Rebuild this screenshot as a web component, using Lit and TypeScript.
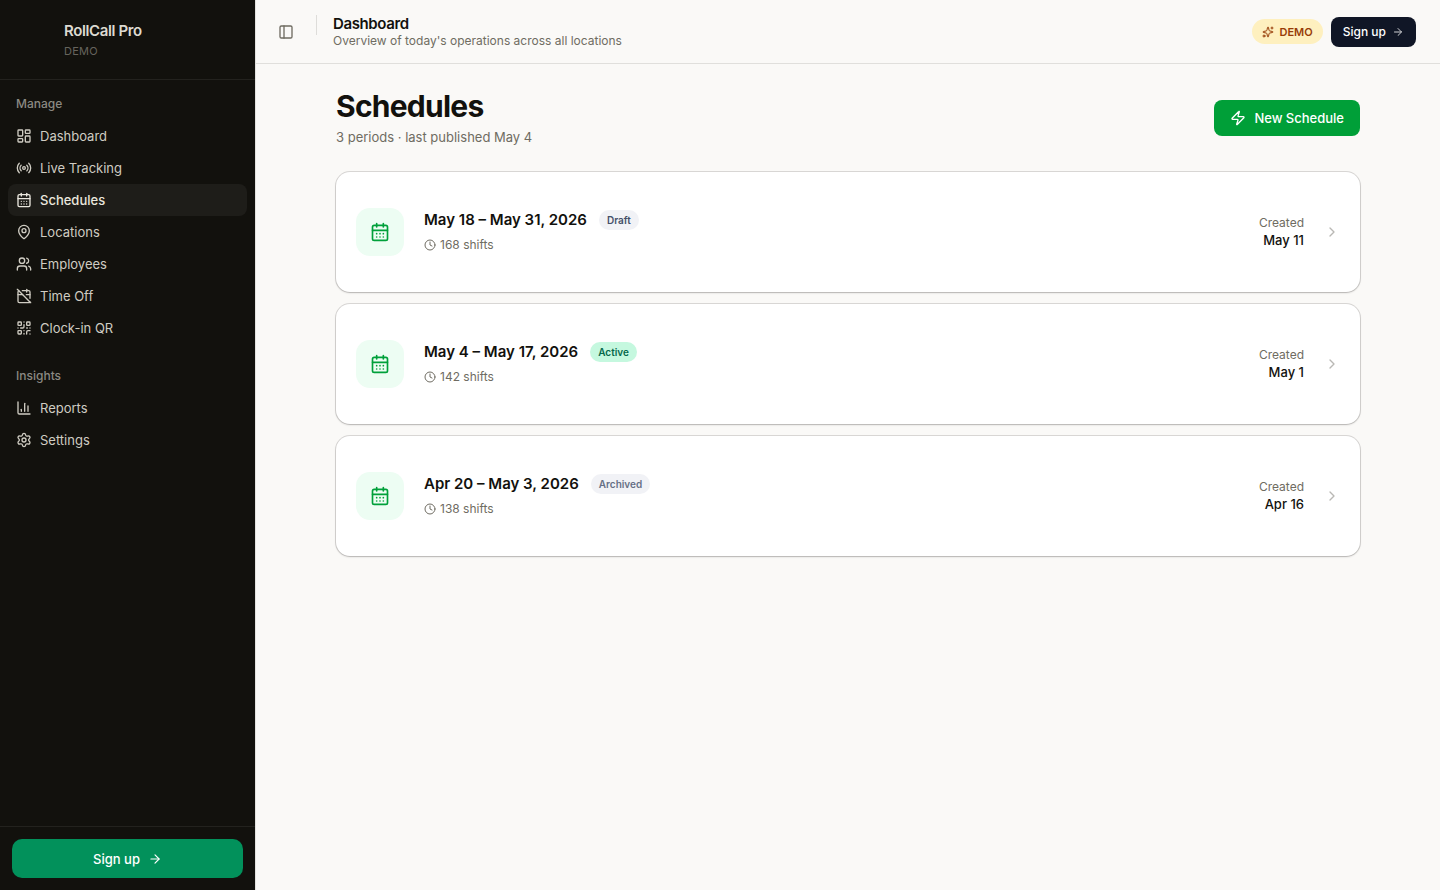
import { LitElement, html, css, svg, nothing } from "lit";
import { customElement, property } from "lit/decorators.js";
import { classMap } from "lit/directives/class-map.js";

const icons = {
  dashboard: svg`<rect width="7" height="9" x="3" y="3" rx="1"/><rect width="7" height="5" x="14" y="3" rx="1"/><rect width="7" height="9" x="14" y="12" rx="1"/><rect width="7" height="5" x="3" y="16" rx="1"/>`,
  radio: svg`<path d="M4.9 19.1C1 15.2 1 8.8 4.9 4.9"/><path d="M7.8 16.2c-2.3-2.3-2.3-6.1 0-8.5"/><circle cx="12" cy="12" r="2"/><path d="M16.2 7.8c2.3 2.3 2.3 6.1 0 8.5"/><path d="M19.1 4.9C23 8.8 23 15.1 19.1 19"/>`,
  calendar: svg`<path d="M8 2v4"/><path d="M16 2v4"/><rect width="18" height="18" x="3" y="4" rx="2"/><path d="M3 10h18"/><path d="M8 14h.01"/><path d="M12 14h.01"/><path d="M16 14h.01"/><path d="M8 18h.01"/><path d="M12 18h.01"/><path d="M16 18h.01"/>`,
  pin: svg`<path d="M20 10c0 4.993-5.539 10.193-7.399 11.799a1 1 0 0 1-1.202 0C9.539 20.193 4 14.993 4 10a8 8 0 0 1 16 0"/><circle cx="12" cy="10" r="3"/>`,
  users: svg`<path d="M16 21v-2a4 4 0 0 0-4-4H6a4 4 0 0 0-4 4v2"/><path d="M16 3.128a4 4 0 0 1 0 7.744"/><path d="M22 21v-2a4 4 0 0 0-3-3.87"/><circle cx="9" cy="7" r="4"/>`,
  calendarOff: svg`<path d="M4.2 4.2A2 2 0 0 0 3 6v14a2 2 0 0 0 2 2h14a2 2 0 0 0 1.82-1.18"/><path d="M21 15.5V6a2 2 0 0 0-2-2H9.5"/><path d="M16 2v4"/><path d="M3 10h7"/><path d="M21 10h-5.5"/><path d="m2 2 20 20"/>`,
  qr: svg`<rect width="5" height="5" x="3" y="3" rx="1"/><rect width="5" height="5" x="16" y="3" rx="1"/><rect width="5" height="5" x="3" y="16" rx="1"/><path d="M21 16h-3a2 2 0 0 0-2 2v3"/><path d="M21 21v.01"/><path d="M12 7v3a2 2 0 0 1-2 2H7"/><path d="M3 12h.01"/><path d="M12 3h.01"/><path d="M12 16v.01"/><path d="M16 12h1"/><path d="M21 12v.01"/><path d="M12 21v-1"/>`,
  chart: svg`<path d="M3 3v16a2 2 0 0 0 2 2h16"/><path d="M18 17V9"/><path d="M13 17V5"/><path d="M8 17v-3"/>`,
  settings: svg`<path d="M9.671 4.136a2.34 2.34 0 0 1 4.659 0 2.34 2.34 0 0 0 3.319 1.915 2.34 2.34 0 0 1 2.33 4.033 2.34 2.34 0 0 0 0 3.831 2.34 2.34 0 0 1-2.33 4.033 2.34 2.34 0 0 0-3.319 1.915 2.34 2.34 0 0 1-4.659 0 2.34 2.34 0 0 0-3.32-1.915 2.34 2.34 0 0 1-2.33-4.033 2.34 2.34 0 0 0 0-3.831A2.34 2.34 0 0 1 6.35 6.051a2.34 2.34 0 0 0 3.319-1.915"/><circle cx="12" cy="12" r="3"/>`,
  panel: svg`<rect width="18" height="18" x="3" y="3" rx="2"/><path d="M9 3v18"/>`,
  arrow: svg`<path d="M5 12h14"/><path d="m12 5 7 7-7 7"/>`,
  chevron: svg`<path d="m9 18 6-6-6-6"/>`,
  clock: svg`<circle cx="12" cy="12" r="10"/><path d="M12 6v6l4 2"/>`,
  zap: svg`<path d="M4 14a1 1 0 0 1-.78-1.63l9.9-10.2a.5.5 0 0 1 .86.46l-1.92 6.02A1 1 0 0 0 13 10h7a1 1 0 0 1 .78 1.63l-9.9 10.2a.5.5 0 0 1-.86-.46l1.92-6.02A1 1 0 0 0 11 14z"/>`,
  sparkles: svg`<path d="M11.017 2.814a1 1 0 0 1 1.966 0l1.051 5.558a2 2 0 0 0 1.594 1.594l5.558 1.051a1 1 0 0 1 0 1.966l-5.558 1.051a2 2 0 0 0-1.594 1.594l-1.051 5.558a1 1 0 0 1-1.966 0l-1.051-5.558a2 2 0 0 0-1.594-1.594l-5.558-1.051a1 1 0 0 1 0-1.966l5.558-1.051a2 2 0 0 0 1.594-1.594z"/><path d="M20 2v4"/><path d="M22 4h-4"/><circle cx="4" cy="20" r="2"/>`,
};

type IconName = keyof typeof icons;

const icon = (name: IconName, size = 16) => html`
  <svg
    width=${size}
    height=${size}
    viewBox="0 0 24 24"
    fill="none"
    stroke="currentColor"
    stroke-width="2"
    stroke-linecap="round"
    stroke-linejoin="round"
    aria-hidden="true"
  >${icons[name]}</svg>
`;

const base = css`
  * {
    box-sizing: border-box;
    margin: 0;
    padding: 0;
  }
  svg {
    display: block;
    flex: none;
  }
  a {
    color: inherit;
    text-decoration: none;
  }
  button {
    font: inherit;
    border: 0;
    cursor: pointer;
  }
  ul {
    list-style: none;
  }
`;

const navigation: { label: string; items: { text: string; icon: IconName }[] }[] = [
  {
    label: "Manage",
    items: [
      { text: "Dashboard", icon: "dashboard" },
      { text: "Live Tracking", icon: "radio" },
      { text: "Schedules", icon: "calendar" },
      { text: "Locations", icon: "pin" },
      { text: "Employees", icon: "users" },
      { text: "Time Off", icon: "calendarOff" },
      { text: "Clock-in QR", icon: "qr" },
    ],
  },
  {
    label: "Insights",
    items: [
      { text: "Reports", icon: "chart" },
      { text: "Settings", icon: "settings" },
    ],
  },
];

@customElement("app-sidebar")
export class AppSidebar extends LitElement {
  @property() current = "";

  static styles = [
    base,
    css`
      :host {
        display: flex;
        flex-direction: column;
        background: #12110d;
        color: #cfccc2;
        border-right: 1px solid #e3e2df;
      }
      .brand {
        height: 80px;
        padding: 20px 16px 0 64px;
        border-bottom: 1px solid #23221e;
      }
      .name {
        font-size: 15px;
        font-weight: 600;
        line-height: 22px;
        letter-spacing: -0.025em;
        color: #dddad1;
      }
      .plan {
        font-size: 11px;
        line-height: 18px;
        letter-spacing: 0.02em;
        color: #66645d;
      }
      nav {
        flex: 1;
      }
      .group {
        padding: 8px;
      }
      .label {
        font-size: 12px;
        font-weight: 500;
        line-height: 32px;
        padding: 0 8px;
        color: #8b8982;
      }
      .link {
        display: flex;
        align-items: center;
        gap: 8px;
        height: 32px;
        padding: 0 8px;
        border-radius: 8px;
        font-size: 13px;
      }
      .link.active {
        background: #1e1d19;
        color: #eae7de;
        font-weight: 500;
      }
      .foot {
        padding: 12px;
        border-top: 1px solid #23221e;
      }
      .signup {
        display: flex;
        align-items: center;
        justify-content: center;
        gap: 8px;
        width: 100%;
        height: 39px;
        border-radius: 10px;
        background: #02915b;
        color: #fff;
        font-size: 13px;
        font-weight: 500;
      }
    `,
  ];

  render() {
    return html`
      <div class="brand">
        <p class="name">RollCall Pro</p>
        <p class="plan">DEMO</p>
      </div>
      <nav aria-label="Main">
        ${navigation.map(
          (group) => html`
            <div class="group">
              <p class="label">${group.label}</p>
              <ul>
                ${group.items.map((item) => {
                  const active = item.text === this.current;
                  return html`<li>
                    <a
                      href="#"
                      class=${classMap({ link: true, active })}
                      aria-current=${active ? "page" : nothing}
                    >${icon(item.icon)}<span>${item.text}</span></a>
                  </li>`;
                })}
              </ul>
            </div>
          `,
        )}
      </nav>
      <div class="foot">
        <button class="signup" type="button">Sign up ${icon("arrow", 14)}</button>
      </div>
    `;
  }
}

@customElement("app-header")
export class AppHeader extends LitElement {
  static styles = [
    base,
    css`
      :host {
        display: block;
      }
      .bar {
        display: flex;
        align-items: center;
        height: 64px;
        padding: 0 24px 0 16px;
        border-bottom: 1px solid #e0dfdc;
      }
      .toggle {
        display: grid;
        place-items: center;
        width: 28px;
        height: 28px;
        background: none;
        color: #6f6c62;
      }
      .rule {
        align-self: flex-start;
        width: 1px;
        height: 20px;
        margin: 15px 16px 0;
        background: #dedddA;
      }
      .titles {
        flex: 1;
      }
      .title {
        font-size: 15px;
        font-weight: 600;
        line-height: 18px;
        letter-spacing: -0.025em;
        color: #12110d;
      }
      .sub {
        font-size: 12px;
        line-height: 16px;
        color: #6f6c62;
      }
      .actions {
        display: flex;
        align-items: center;
        gap: 8px;
      }
      .demo {
        display: flex;
        align-items: center;
        gap: 6px;
        height: 25px;
        padding: 0 10px;
        border-radius: 13px;
        background: #fef0bf;
        color: #973c08;
        font-size: 11px;
        font-weight: 600;
      }
      .signup {
        display: flex;
        align-items: center;
        gap: 6px;
        height: 30px;
        padding: 0 12px;
        border-radius: 8px;
        background: #101626;
        color: #fff;
        font-size: 12px;
        font-weight: 500;
      }
      .signup svg {
        opacity: 0.8;
      }
    `,
  ];

  render() {
    return html`
      <header class="bar">
        <button class="toggle" type="button" aria-label="Toggle sidebar">${icon("panel")}</button>
        <div class="rule"></div>
        <div class="titles">
          <p class="title">Dashboard</p>
          <p class="sub">Overview of today's operations across all locations</p>
        </div>
        <div class="actions">
          <span class="demo">${icon("sparkles", 12)}DEMO</span>
          <button class="signup" type="button">Sign up ${icon("arrow", 12)}</button>
        </div>
      </header>
    `;
  }
}

@customElement("schedule-card")
export class ScheduleCard extends LitElement {
  @property() period = "";
  @property() status = "";
  @property({ type: Number }) shifts = 0;
  @property() created = "";

  static styles = [
    base,
    css`
      :host {
        display: block;
      }
      .card {
        display: flex;
        align-items: center;
        height: 120px;
        padding: 0 20px;
        border-radius: 14px;
        background: #fff;
        box-shadow:
          0 0 0 1px rgba(18, 17, 13, 0.14),
          0 1px 2px rgba(18, 17, 13, 0.18);
      }
      .tile {
        display: grid;
        place-items: center;
        width: 48px;
        height: 48px;
        border-radius: 14px;
        background: #edfdf3;
        color: #00a03a;
      }
      .info {
        flex: 1;
        padding-left: 20px;
      }
      .heading {
        display: flex;
        align-items: center;
        gap: 12px;
      }
      .period {
        font-size: 15px;
        font-weight: 600;
        line-height: 22px;
        color: #12110d;
      }
      .badge {
        height: 20px;
        padding: 0 8px;
        border-radius: 10px;
        font-size: 10px;
        font-weight: 600;
        line-height: 20px;
      }
      .draft {
        background: #f1f2f6;
        color: #45506a;
      }
      .active {
        background: #c5f8df;
        color: #05694c;
      }
      .archived {
        background: #f1f2f6;
        color: #667085;
      }
      .shifts {
        display: flex;
        align-items: center;
        gap: 4px;
        margin-top: 4px;
        font-size: 12px;
        line-height: 20px;
        color: #6f6c62;
      }
      .meta {
        text-align: right;
        font-size: 12px;
        line-height: 16px;
        color: #6f6c62;
      }
      .date {
        font-size: 13px;
        font-weight: 500;
        line-height: 18px;
        color: #12110d;
      }
      .go {
        margin-left: 20px;
        color: #b9b8b4;
      }
    `,
  ];

  render() {
    return html`
      <a class="card" href="#">
        <div class="tile">${icon("calendar", 20)}</div>
        <div class="info">
          <div class="heading">
            <h2 class="period">${this.period}</h2>
            <span class="badge ${this.status.toLowerCase()}">${this.status}</span>
          </div>
          <p class="shifts">${icon("clock", 12)}${this.shifts} shifts</p>
        </div>
        <div class="meta">
          <p>Created</p>
          <p class="date">${this.created}</p>
        </div>
        <div class="go">${icon("chevron")}</div>
      </a>
    `;
  }
}

const schedules = [
  { period: "May 18 – May 31, 2026", status: "Draft", shifts: 168, created: "May 11" },
  { period: "May 4 – May 17, 2026", status: "Active", shifts: 142, created: "May 1" },
  { period: "Apr 20 – May 3, 2026", status: "Archived", shifts: 138, created: "Apr 16" },
];

@customElement("app-root")
export class AppRoot extends LitElement {
  static styles = [
    base,
    css`
      :host {
        display: grid;
        grid-template-columns: 256px minmax(0, 1fr);
        min-height: 100vh;
        background: #faf9f7;
        color: #12110d;
        font-family: Inter, "Liberation Sans", sans-serif;
        font-size: 14px;
        line-height: 20px;
      }
      main {
        max-width: 1072px;
        margin: 0 auto;
        padding: 24px;
      }
      .top {
        display: flex;
        align-items: center;
        justify-content: space-between;
        margin-bottom: 24px;
      }
      h1 {
        font-size: 30px;
        font-weight: 700;
        line-height: 36px;
        letter-spacing: -0.025em;
      }
      .summary {
        margin-top: 4px;
        padding-bottom: 2px;
        font-size: 13px;
        line-height: 18px;
        color: #6f6c62;
      }
      .new {
        display: flex;
        align-items: center;
        gap: 8px;
        height: 36px;
        padding: 0 16px;
        border-radius: 8px;
        background: #009f38;
        color: #fff;
        font-size: 13px;
        font-weight: 500;
      }
      .list {
        display: grid;
        gap: 12px;
      }
    `,
  ];

  render() {
    return html`
      <app-sidebar current="Schedules"></app-sidebar>
      <div>
        <app-header></app-header>
        <main>
          <div class="top">
            <div>
              <h1>Schedules</h1>
              <p class="summary">3 periods · last published May 4</p>
            </div>
            <button class="new" type="button">${icon("zap")}New Schedule</button>
          </div>
          <div class="list">
            ${schedules.map(
              (s) => html`<schedule-card
                .period=${s.period}
                .status=${s.status}
                .shifts=${s.shifts}
                .created=${s.created}
              ></schedule-card>`,
            )}
          </div>
        </main>
      </div>
    `;
  }
}
